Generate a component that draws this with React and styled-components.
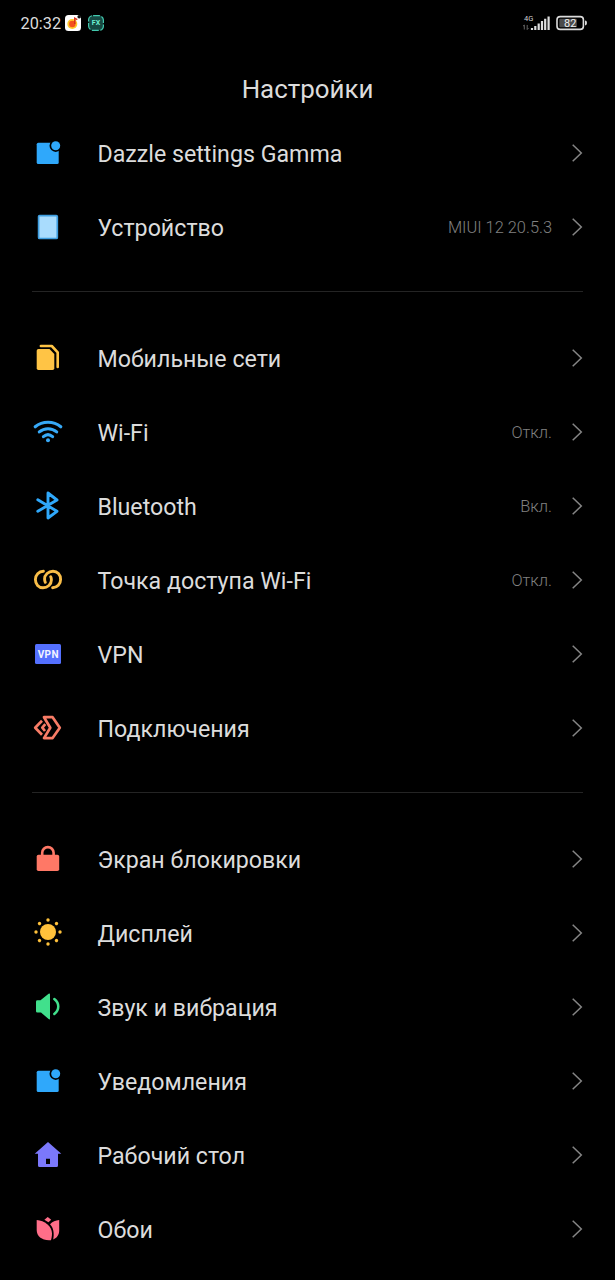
import React from 'react';
import styled, { createGlobalStyle } from 'styled-components';

const GlobalStyle = createGlobalStyle`
  body {
    margin: 0;
    background-color: #000;
    font-family: Roboto, 'Noto Sans', sans-serif;
  }
`;

const Screen = styled.div`
  width: 615px;
  height: 1280px;
  overflow: hidden;
  background-color: #000;
`;

const StatusBar = styled.div`
  height: 46px;
  padding: 0 27px 0 20.5px;
  display: flex;
  align-items: center;
  justify-content: space-between;
  box-sizing: border-box;
`;

const StatusGroup = styled.div`
  display: flex;
  align-items: center;
`;

const Time = styled.span`
  width: 44.5px;
  font-size: 16.3px;
  line-height: 20px;
  color: #dcdcdc;
  padding-top: 2px;
`;

const StatusIcon = styled.svg`
  display: block;
  margin-right: ${(props) => props.$gap || 0}px;
`;

const Title = styled.h1`
  height: 70px;
  margin: 0;
  padding-top: 26px;
  box-sizing: border-box;
  font-size: 25.9px;
  line-height: 34px;
  font-weight: 400;
  text-align: center;
  color: #dcdcdc;
`;

const Group = styled.ul`
  margin: 0;
  padding: 0;
  list-style: none;
`;

const Row = styled.li`
  height: 74px;
  padding: 0 32px;
  display: flex;
  align-items: center;
`;

const Icon = styled.svg`
  width: 32px;
  height: 32px;
  flex: none;
`;

const Label = styled.span`
  flex: 1;
  margin-left: 33.5px;
  padding-top: 2px;
  font-size: 23.2px;
  line-height: 30px;
  font-weight: 400;
  color: #dcdcdc;
`;

const Value = styled.span`
  margin-right: 18px;
  padding-top: 2px;
  font-size: 16.4px;
  line-height: 22px;
  font-weight: 300;
  color: #808080;
`;

const Chevron = styled.svg`
  width: 13px;
  height: 20px;
  flex: none;
`;

const Divider = styled.hr`
  height: 1px;
  margin: 27px 32px 29px;
  border: none;
  background-color: #242424;
`;

const line = { fill: 'none', strokeLinecap: 'round', strokeLinejoin: 'round' };

const icons = {
  badge: (
    <>
      <rect x="4.7" y="5.7" width="22" height="21.4" rx="1.6" fill="#2fa8fb" />
      <circle cx="23.7" cy="8.7" r="6.2" fill="#000" />
      <circle cx="23.7" cy="8.7" r="4.5" fill="#2fa8fb" />
    </>
  ),
  device: (
    <rect x="6.6" y="4.6" width="18.7" height="22.9" rx="1" fill="#a9dcfd" stroke="#3f9ee0" strokeWidth="1.7" />
  ),
  sim: (
    <>
      <path d="M6.5 7H17.5L22.3 12V26.3A1.7 1.7 0 0 1 20.6 28H6.4A1.7 1.7 0 0 1 4.7 26.3V8.8A1.8 1.8 0 0 1 6.5 7Z" fill="#ffc445" />
      <path d="M8.9 4H19.8L25.7 10.3V25" {...line} stroke="#ffc445" strokeWidth="2.6" />
    </>
  ),
  wifi: (
    <g {...line} stroke="#37a9f7" strokeWidth="3.1">
      <path d="M3.2 10.8C10.5 4.7 21.5 4.7 28.8 10.8" />
      <path d="M7.3 15.9C12.3 11.7 19.7 11.7 24.7 15.9" />
      <path d="M11.4 20.7C14.2 18.2 17.8 18.2 20.6 20.7" />
      <circle cx="16" cy="24.3" r="2" fill="#37a9f7" stroke="none" />
    </g>
  ),
  bluetooth: (
    <path d="M5.8 9.8L25 21.3L16 28V3L25 10L5.8 21.3" {...line} stroke="#2fa8fb" strokeWidth="2.9" />
  ),
  hotspot: (
    <g {...line} stroke="#f9bd48" strokeWidth="2.9">
      <path d="M11.4 7.2C6.8 7.4 3.4 11 3.4 15.6C3.4 20.3 6.6 23.8 11 23.8C15.6 23.8 19.4 20.4 19.4 16C19.4 14.8 19.2 13.7 18.7 12.7" />
      <path d="M20.6 23.8C25.2 23.6 28.6 20 28.6 15.4C28.6 10.7 25.4 7.2 21 7.2C16.4 7.2 12.6 10.6 12.6 15C12.6 16.2 12.8 17.3 13.3 18.3" />
    </g>
  ),
  vpn: (
    <>
      <rect x="3" y="6" width="26" height="20" rx="1.5" fill="#5470ff" />
      <text x="16.3" y="19.6" fill="#f2f4ff" fontSize="10" fontWeight="700" letterSpacing="0.4" textAnchor="middle">
        VPN
      </text>
    </>
  ),
  connections: (
    <g fill="none" stroke="#f87c66" strokeWidth="2.7" strokeLinejoin="round">
      <path d="M12 5.2H20.6L27.8 15.7L20.6 26.1H12L18.3 15.7Z" />
      <path d="M10 8.7L3.2 15.7L10 22.8" />
      <path d="M13.3 12.2L10.3 15.7L13 19" />
    </g>
  ),
  lock: (
    <>
      <rect x="4.7" y="11.7" width="22.5" height="16.3" rx="1.8" fill="#ff7866" />
      <path d="M10.2 13V9.8A5.7 5.7 0 0 1 21.6 9.8V13" {...line} stroke="#ff7866" strokeWidth="2.6" />
    </>
  ),
  sun: (
    <g fill="#ffc13b">
      <circle cx="16" cy="15" r="8" />
      {[0, 45, 90, 135, 180, 225, 270, 315].map((angle) => (
        <circle key={angle} cx="16" cy="3" r="1.7" transform={`rotate(${angle} 16 15)`} />
      ))}
    </g>
  ),
  sound: (
    <>
      <path d="M5.4 9.3H8.5L16.6 2.7Q18 1.8 18 3.4V27.4Q18 29 16.6 28L9 21.6H5.4Q4 21.6 4 20.2V10.7Q4 9.3 5.4 9.3Z" fill="#41e08c" />
      <path d="M22.3 8C27.6 12 27.6 19 22.3 23" {...line} stroke="#41e08c" strokeWidth="2.5" />
    </>
  ),
  home: (
    <path
      d="M16 3L29.3 14.7H26V26.5A1.5 1.5 0 0 1 24.5 28H7.5A1.5 1.5 0 0 1 6 26.5V14.7H2.7ZM14 19.8V25H18V19.8Z"
      fill="#7b78fb"
      fillRule="evenodd"
    />
  ),
  tulip: (
    <g fill="#ff6e89">
      <path d="M15.7 4.1L19.2 6.7L16.4 9.2L12.4 6.8Z" />
      <path d="M4.7 7C12.5 7.5 19.8 13 20 20.5C20 23 19.6 25.4 18.9 27.2C10.5 28 4.7 23.5 4.7 17Z" />
      <path d="M27.2 7V17.5C27.2 21.8 24.9 25 21.2 26.5C22.4 20.5 21.6 14.8 18 11.2C20.4 8.8 23.6 7.3 27.2 7Z" />
    </g>
  ),
};

const groups = [
  [
    { icon: 'badge', label: 'Dazzle settings Gamma' },
    { icon: 'device', label: 'Устройство', value: 'MIUI 12 20.5.3' },
  ],
  [
    { icon: 'sim', label: 'Мобильные сети' },
    { icon: 'wifi', label: 'Wi-Fi', value: 'Откл.' },
    { icon: 'bluetooth', label: 'Bluetooth', value: 'Вкл.' },
    { icon: 'hotspot', label: 'Точка доступа Wi-Fi', value: 'Откл.' },
    { icon: 'vpn', label: 'VPN' },
    { icon: 'connections', label: 'Подключения' },
  ],
  [
    { icon: 'lock', label: 'Экран блокировки' },
    { icon: 'sun', label: 'Дисплей' },
    { icon: 'sound', label: 'Звук и вибрация' },
    { icon: 'badge', label: 'Уведомления' },
    { icon: 'home', label: 'Рабочий стол' },
    { icon: 'tulip', label: 'Обои' },
  ],
];

const App = () => {
  return (
    <Screen>
      <GlobalStyle />
      <StatusBar>
        <StatusGroup>
          <Time>20:32</Time>
          <StatusIcon width="16" height="16" viewBox="0 0 16 16" $gap={7}>
            <rect width="16" height="16" rx="3.5" fill="#fff" />
            <circle cx="7.3" cy="9" r="5" fill="#ffc928" />
            <circle cx="7.3" cy="9" r="3.2" fill="#f4511e" />
            <path d="M9.8 9V3.2L12.3 4.6" fill="none" stroke="#d8321c" strokeWidth="1.5" />
            <circle cx="14.2" cy="1.8" r="1.8" fill="#111" />
          </StatusIcon>
          <StatusIcon width="16" height="16" viewBox="0 0 16 16">
            <rect x="0.6" y="0.6" width="14.8" height="14.8" rx="4.5" fill="#164943" stroke="#43c9ae" strokeWidth="1.2" strokeDasharray="7 1.5" />
            <text x="8" y="10.4" fill="#6df0d2" fontSize="7" fontWeight="700" textAnchor="middle">
              FX
            </text>
          </StatusIcon>
        </StatusGroup>
        <StatusGroup>
          <StatusIcon width="28" height="18" viewBox="0 0 28 18" $gap={6}>
            <text x="2" y="7.3" fill="#d0d0d0" fontSize="7.5">
              4G
            </text>
            <path d="M2.3 11V15.5M1 12.2L2.3 11M5.2 11V15.5M5.2 15.5L6.5 14.2" stroke="#707070" strokeWidth="0.9" fill="none" />
            <path d="M10 16V14M13.3 16V12M16.7 16V9.5M20 16V7M23.2 16V4.8M26.6 16V2.5" stroke="#dedede" strokeWidth="2.2" />
          </StatusIcon>
          <StatusIcon width="32" height="16" viewBox="0 0 32 16">
            <rect x="1" y="1.6" width="26.4" height="12.8" rx="3.2" fill="none" stroke="#dcdcdc" strokeWidth="1.6" />
            <rect x="3.3" y="3.8" width="17.5" height="8.4" rx="1" fill="#4b4b4b" />
            <path d="M29 5.6Q31 5.6 31 8Q31 10.4 29 10.4Z" fill="#dcdcdc" />
            <text x="14.3" y="11.9" fill="#f0f0f0" fontSize="11" textAnchor="middle">
              82
            </text>
          </StatusIcon>
        </StatusGroup>
      </StatusBar>
      <Title>Настройки</Title>
      {groups.map((rows, index) => (
        <React.Fragment key={index}>
          {index > 0 && <Divider />}
          <Group>
            {rows.map((row) => (
              <Row key={row.label}>
                <Icon viewBox="0 0 32 32">{icons[row.icon]}</Icon>
                <Label>{row.label}</Label>
                {row.value && <Value>{row.value}</Value>}
                <Chevron viewBox="0 0 13 20">
                  <path d="M2.7 1.8L11.3 10L2.7 18.2" fill="none" stroke="#858585" strokeWidth="1.5" />
                </Chevron>
              </Row>
            ))}
          </Group>
        </React.Fragment>
      ))}
    </Screen>
  );
};

export default App;
